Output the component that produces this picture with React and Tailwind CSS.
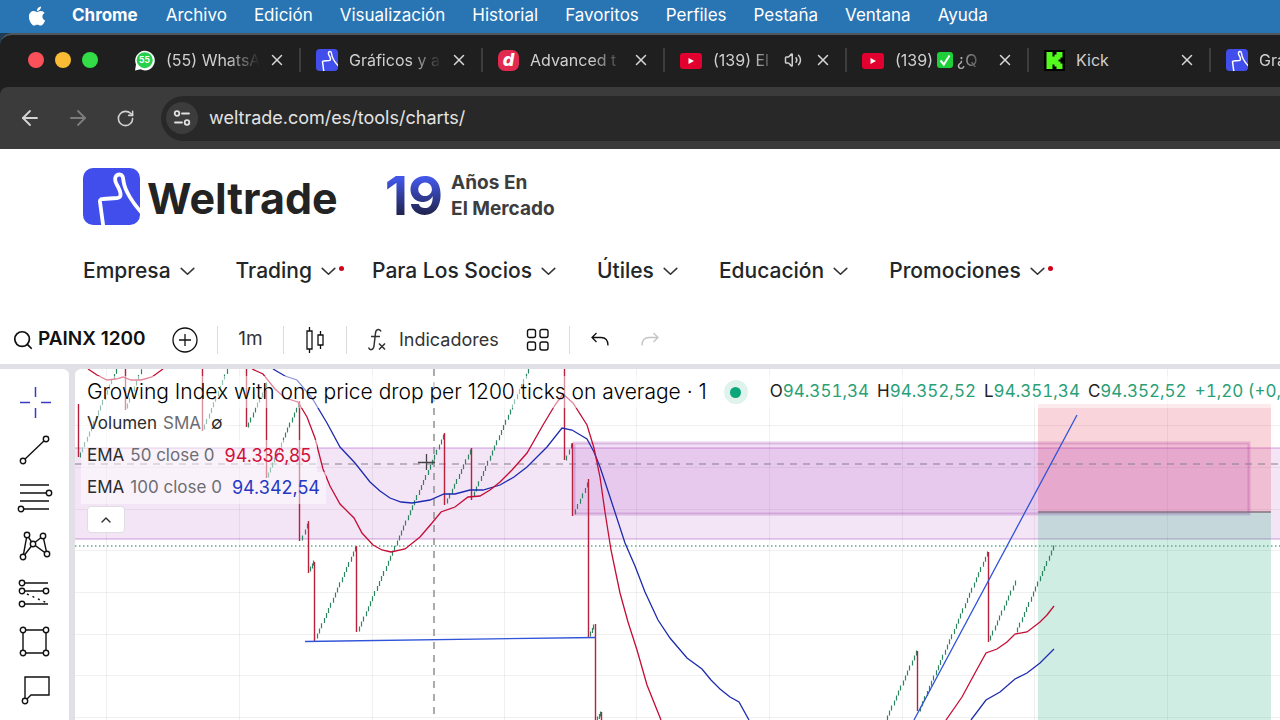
import React from 'react';
import { FaApple } from 'react-icons/fa';
import { ArrowLeft, ArrowRight, RotateCw, Volume2, X, Search, ChevronUp } from 'lucide-react';

const MENU_ITEMS = ['Archivo', 'Edición', 'Visualización', 'Historial', 'Favoritos', 'Perfiles', 'Pestaña', 'Ventana', 'Ayuda'];

const NAV_ITEMS = [
    { label: 'Empresa' },
    { label: 'Trading', dot: true },
    { label: 'Para Los Socios' },
    { label: 'Útiles' },
    { label: 'Educación' },
    { label: 'Promociones', dot: true },
];

function WeltradeMark({ className }) {
    return (
        <svg viewBox="0 0 57 57" className={className} aria-hidden="true">
            <defs>
                <clipPath id="mark-clip"><rect width="57" height="57" rx="10" /></clipPath>
            </defs>
            <rect width="57" height="57" rx="10" fill="#414eec" />
            <path
                d="M20.500 60 L17 34 Q16.500 31 20 31 L34 30 Q38 29.500 37.500 25.500 Q37 22 33.500 16 C30.500 10 33 6.500 36.500 6.500 C40 6.500 40 9.500 40.500 13 C41.500 22 50 36 60 46"
                fill="none" stroke="#fff" strokeWidth="3.800" strokeLinejoin="round" clipPath="url(#mark-clip)"
            />
        </svg>
    );
}

function WhatsappIcon() {
    return (
        <svg viewBox="0 0 21 21" className="w-[21px] h-[21px] shrink-0" aria-hidden="true">
            <path d="M1 20.500 L2 14.500 A9.800 9.800 0 1 1 6.500 19.300 Z" fill="#fff" />
            <circle cx="10.700" cy="10.200" r="8" fill="#25d04a" />
            <text x="10.500" y="13.200" textAnchor="middle" fontSize="8.500" fontWeight="700" fill="#fff" fontFamily="Inter, sans-serif">55</text>
        </svg>
    );
}

function AdvancedIcon() {
    return (
        <span className="w-[21px] h-[21px] shrink-0 rounded-[7px] bg-[#e22a50] text-white text-lg leading-5 font-extrabold italic text-center">d</span>
    );
}

function YoutubeIcon() {
    return (
        <svg viewBox="0 0 22 21" className="w-[22px] h-[21px] shrink-0" aria-hidden="true">
            <rect x="0" y="3" width="22" height="16" rx="3" fill="#e2002f" />
            <path d="M8.500 8 L14 11 L8.500 14 Z" fill="#fff" />
        </svg>
    );
}

function KickIcon() {
    return (
        <svg viewBox="0 0 21 21" className="w-[21px] h-[21px] shrink-0" aria-hidden="true">
            <rect width="21" height="21" fill="#000" />
            <path d="M2.500 2 H8.500 V6.500 H10.500 V4.500 H12.500 V2 H18.500 V7.500 H16.500 V9.500 H14.500 V11.500 H16.500 V13.500 H18.500 V19 H12.500 V16.500 H10.500 V14.500 H8.500 V19 H2.500 Z" fill="#54fc1e" />
        </svg>
    );
}

function CheckEmoji() {
    return (
        <svg viewBox="0 0 16 16" className="inline-block w-4 h-4 mx-1 -mt-1" aria-hidden="true">
            <rect width="16" height="16" rx="3" fill="#1fcf3a" />
            <path d="M3.500 8.500 L6.800 12.500 L12.500 3.500" fill="none" stroke="#fff" strokeWidth="2" />
        </svg>
    );
}

const TABS = [
    { icon: <WhatsappIcon />, title: '(55) WhatsA' },
    { icon: <WeltradeMark className="w-[22px] h-[22px] shrink-0" />, title: 'Gráficos y a' },
    { icon: <AdvancedIcon />, title: 'Advanced t' },
    { icon: <YoutubeIcon />, title: '(139) El', audio: true },
    { icon: <YoutubeIcon />, title: <>(139)<CheckEmoji />¿Q</> },
    { icon: <KickIcon />, title: 'Kick', short: true },
    { icon: <WeltradeMark className="w-[22px] h-[22px] shrink-0" />, title: 'Gráficos y a' },
];

function MenuBar() {
    return (
        <nav className="flex items-center h-[33px] pl-[26px] pb-px gap-[27px] bg-[#2974b2] text-white text-[17px] shrink-0">
            <button aria-label="Apple" className="-mr-[3px]"><FaApple className="w-[22px] h-[22px]" /></button>
            <button className="mr-px font-bold">Chrome</button>
            {MENU_ITEMS.map((item) => <button key={item}>{item}</button>)}
        </nav>
    );
}

function Tab({ icon, title, audio, short }) {
    return (
        <div className="flex items-center w-[182px] h-6 shrink-0 pl-[15px] pr-[13px] border-r-2 border-[#3d3d3d]">
            {icon}
            <span className={`flex-1 min-w-0 ml-[11px] overflow-hidden whitespace-nowrap text-[#cfcfcf] text-base leading-6 ${short ? '' : 'mask-r-from-65% mask-r-to-100%'}`}>
                {title}
            </span>
            {audio && <Volume2 className="w-[18px] h-[18px] ml-2 mr-1 text-[#cfcfcf] shrink-0" />}
            <button aria-label="Cerrar pestaña" className="ml-2 shrink-0 text-[#d6d6d6]"><X className="w-[18px] h-[18px]" /></button>
        </div>
    );
}

function BrowserChrome() {
    return (
        <header className="shrink-0 bg-[#1f3c55]">
            <div className="rounded-tl-xl border-t-2 border-[#50565b] bg-[#1f1f1f] overflow-hidden">
                <div className="flex items-center h-[52px] pl-7 pb-[2px]">
                    <div className="flex gap-[11px] mr-[21px] shrink-0">
                        <span className="w-4 h-4 rounded-full bg-[#f9505a]" />
                        <span className="w-4 h-4 rounded-full bg-[#fbbb35]" />
                        <span className="w-4 h-4 rounded-full bg-[#33dd47]" />
                    </div>
                    {TABS.map((tab, i) => <Tab key={i} {...tab} />)}
                </div>
            </div>
            <div className="bg-[#1f1f1f]">
                <div className="flex items-center h-[62px] pl-[18px] rounded-tl-lg bg-[#3b3b3b]">
                    <button aria-label="Atrás" className="text-[#d4d4d4]"><ArrowLeft className="w-6 h-6" strokeWidth={1.800} /></button>
                    <button aria-label="Adelante" className="ml-6 text-[#7c7c7c]"><ArrowRight className="w-6 h-6" strokeWidth={1.800} /></button>
                    <button aria-label="Recargar" className="ml-[26px] text-[#d4d4d4]"><RotateCw className="w-[19px] h-[19px]" /></button>
                    <div className="flex flex-1 items-center h-[45px] ml-[26px] pl-[5px] rounded-l-full bg-[#282828]">
                        <button aria-label="Información del sitio" className="flex items-center justify-center w-8 h-8 rounded-full bg-[#3c3c3c]">
                            <svg viewBox="0 0 18 16" className="w-[18px] h-4" fill="none" stroke="#e0e0e0" strokeWidth="1.800">
                                <circle cx="4" cy="3.500" r="2.300" />
                                <path d="M9 3.500 H16 M2 12.500 H9" strokeLinecap="round" />
                                <circle cx="14" cy="12.500" r="2.300" />
                            </svg>
                        </button>
                        <input
                            aria-label="Dirección"
                            defaultValue="weltrade.com/es/tools/charts/"
                            className="flex-1 ml-[11px] bg-transparent text-[#e3e3e3] text-lg outline-none"
                        />
                    </div>
                </div>
            </div>
        </header>
    );
}

function SiteHeader() {
    return (
        <header className="shrink-0 pt-[18px] pl-[83px] text-[#232323]">
            <div className="flex items-center h-[58px]">
                <a href="#" className="flex items-center">
                    <WeltradeMark className="w-[57px] h-[57px]" />
                    <span className="ml-[7px] mt-1 text-[43px] leading-[58px] font-bold">Weltrade</span>
                </a>
                <span className="ml-[47px] text-[54px] leading-[58px] font-bold bg-linear-to-b from-[#4257e8] from-20% to-[#1f2148] to-85% bg-clip-text text-transparent">19</span>
                <p className="ml-2 text-[19px] leading-[26px] font-bold text-[#3d3d3d]">Años En<br />El Mercado</p>
            </div>
            <nav className="flex items-center h-9 mt-7 text-[21px] font-medium text-[#222628]">
                {NAV_ITEMS.map(({ label, dot }) => (
                    <a key={label} href="#" className={dot ? 'relative flex items-center mr-9' : 'relative flex items-center mr-[41px]'}>
                        {label}
                        <svg viewBox="0 0 16 10" className="w-[15px] h-[9px] ml-[9px]" fill="none" stroke="#333" strokeWidth="1.700" aria-hidden="true">
                            <path d="M1 1.500 L8 8 L15 1.500" strokeLinecap="round" strokeLinejoin="round" />
                        </svg>
                        {dot && <span className="absolute -right-2 top-[11px] w-[5px] h-[5px] rounded-full bg-[#d0021b]" />}
                    </a>
                ))}
            </nav>
        </header>
    );
}

function Divider() {
    return <span className="w-px h-7 bg-[#dcdce0]" />;
}

function ChartToolbar() {
    return (
        <div className="flex items-center h-[51px] mt-6 pt-[2px] pl-3 text-[#111] text-[19px] shrink-0">
            <button className="flex items-center gap-1 w-[136px] font-semibold whitespace-nowrap">
                <Search className="w-[22px] h-[22px]" strokeWidth={1.900} />PAINX 1200
            </button>
            <button aria-label="Comparar" className="ml-6 mr-[19px]">
                <svg viewBox="0 0 26 26" className="w-[26px] h-[26px]" fill="none" stroke="currentColor" strokeWidth="1.300">
                    <circle cx="13" cy="13" r="12" />
                    <path d="M13 7 V19 M7 13 H19" />
                </svg>
            </button>
            <Divider />
            <button className="w-[65px] text-[#333]">1m</button>
            <Divider />
            <button aria-label="Velas" className="flex justify-center w-[62px]">
                <svg viewBox="0 0 20 28" className="w-5 h-7" fill="none" stroke="currentColor" strokeWidth="1.300">
                    <path d="M2 5 H7 V23 H2 Z M4.500 1 V5 M4.500 23 V27 M13 9 H18 V19 H13 Z M15.500 5 V9 M15.500 19 V23" />
                </svg>
            </button>
            <Divider />
            <button className="flex items-center ml-5 text-lg text-[#333]">
                <svg viewBox="0 0 20 26" className="w-5 h-[26px] mr-3" fill="none" stroke="currentColor" strokeWidth="1.500" aria-hidden="true">
                    <path d="M14 4.500 C13 1.500 9 1.500 8.500 6 L7 19 C6.500 23 3 24 1.500 20.500 M4 9.500 H13 M12 16.500 L18 22.500 M18 16.500 L12 22.500" />
                </svg>
                Indicadores
            </button>
            <button aria-label="Plantillas" className="ml-[27px] mr-[19px]">
                <svg viewBox="0 0 24 24" className="w-6 h-6" fill="none" stroke="currentColor" strokeWidth="1.400">
                    <rect x="1.500" y="1.500" width="8" height="8" rx="2" />
                    <rect x="14" y="1.500" width="8" height="8" rx="2" />
                    <rect x="1.500" y="14" width="8" height="8" rx="2" />
                    <rect x="14" y="14" width="8" height="8" rx="2" />
                </svg>
            </button>
            <Divider />
            <button aria-label="Deshacer" className="ml-5">
                <svg viewBox="0 0 20 16" className="w-5 h-4" fill="none" stroke="currentColor" strokeWidth="1.300">
                    <path d="M6.500 1 L2 5.500 L6.500 10 M2 5.500 H11 Q18 5.500 18 13.500" />
                </svg>
            </button>
            <button aria-label="Rehacer" className="ml-[30px] text-[#c4c4c8]">
                <svg viewBox="0 0 20 16" className="w-5 h-4" fill="none" stroke="currentColor" strokeWidth="1.300">
                    <path d="M13.500 1 L18 5.500 L13.500 10 M18 5.500 H9 Q2 5.500 2 13.500" />
                </svg>
            </button>
        </div>
    );
}

// nodes are drawn as small hollow circles on top of the lines
const DRAW_TOOLS = [
    { name: 'Línea de tendencia', d: 'M6 29 L29 7', nodes: [[29, 7], [6, 29]] },
    { name: 'Retroceso de Fibonacci', d: 'M3 5 H32 M3 13 H32 M3 21 H32 M3 29 H32', nodes: [[32, 13], [4, 29]] },
    { name: 'Patrón XABCD', d: 'M6 29 L10 7 L16 16 L26 8 L30 26 L16 16 Z', nodes: [[10, 7], [26, 8], [16, 16], [6, 29], [30, 26]] },
    { name: 'Posición larga', d: 'M5 7 H31 M5 15 H29 M5 28 H31', dots: 'M10 18 L30 27', nodes: [[5, 7], [5, 15], [29, 15], [5, 28]] },
    { name: 'Rectángulo', d: 'M6 6 H29 V29 H6 Z', nodes: [[6, 6], [29, 6], [6, 29], [29, 29]] },
    { name: 'Comentario', d: 'M8 28 V5 H32 V23 H14 L8 29', nodes: [[8, 29]] },
];

function DrawingRail() {
    return (
        <aside className="flex flex-col w-[69px] shrink-0 pt-[9px] bg-white rounded-tr-md">
            <button aria-label="Cruz" className="flex justify-center items-center h-12 shrink-0">
                <svg viewBox="0 0 36 36" className="w-9 h-9" fill="none" stroke="#3a3ac4" strokeWidth="1.500">
                    <path d="M3 18.500 H13 M24 18.500 H34 M18.500 3 V13 M18.500 24 V34" />
                </svg>
            </button>
            {DRAW_TOOLS.map((tool) => (
                <button key={tool.name} aria-label={tool.name} className="flex justify-center items-center h-12 shrink-0">
                    <svg viewBox="0 0 36 36" className="w-9 h-9" fill="none" stroke="#111" strokeWidth="1.400">
                        <path d={tool.d} />
                        {tool.dots && <path d={tool.dots} strokeDasharray="2 4" />}
                        {tool.nodes.map(([x, y]) => <circle key={`${x}-${y}`} cx={x} cy={y} r="2.700" fill="#fff" />)}
                    </svg>
                </button>
            ))}
        </aside>
    );
}

// [x, top, bottom]
const DROPS = [
    [78, 404, 457], [125, 369, 410], [202, 369, 431], [246, 369, 427], [266, 390, 478], [299, 401, 541],
    [308, 521, 573], [314, 562, 642], [356, 546, 632], [444, 433, 505], [471, 448, 500], [564, 369, 460],
    [572, 443, 516], [588, 479, 637], [595, 624, 730], [601, 712, 730], [917, 651, 711], [988, 552, 642],
];

// [x1, y1, x2, y2], price climbing tick by tick
const CLIMBS = [
    [80, 455, 118, 366], [127, 406, 143, 366], [204, 427, 229, 366], [248, 425, 266, 385], [268, 475, 298, 405],
    [302, 538, 307, 526], [310, 569, 313, 563], [317, 636, 355, 549], [359, 629, 443, 437], [447, 501, 470, 452],
    [474, 494, 530, 366], [566, 458, 571, 446], [575, 512, 587, 485], [590, 634, 593, 627], [597, 719, 600, 714],
    [887, 718, 916, 653], [920, 709, 987, 554], [990, 638, 1015, 583], [1017, 630, 1053, 548],
];

const EMA_50 = [
    '88,369 97,375 107,380 116,379 123,377 131,380 141,380 152,377 163,369',
    '252,369 263,374 275,389 285,398 298,402 307,417 315,438 323,469 330,486 340,504 354,518 362,533 373,545 382,550 391,552 405,549 420,537 432,523 441,512 455,507 468,497 480,496 490,490 500,482 512,470 527,453 543,425 555,405 563,394 573,403 587,425 594,448 600,477 605,512 611,550 620,593 628,622 637,650 647,685 661,720',
    '946,720 962,697 975,673 986,653 997,649 1007,642 1015,634 1027,632 1040,622 1047,615 1054,606',
];
const EMA_100 = [
    '273,369 285,376 297,380 312,398 327,423 340,447 355,463 370,482 380,491 390,498 401,502 412,503 430,500 444,494 455,494 470,490 483,490 500,485 514,477 527,467 547,447 562,428 572,430 587,439 594,452 600,467 610,497 625,543 635,566 645,592 658,620 670,638 687,658 702,669 711,680 720,689 730,697 739,702 749,720',
    '971,720 986,700 1000,692 1015,679 1027,673 1040,663 1054,649',
];

const GRID_X = [106, 239, 372, 504, 636, 769, 902, 1034, 1167];
const GRID_Y = [425, 467, 509, 550, 592, 634, 675, 717];

function Climb({ line: [x1, y1, x2, y2] }) {
    const count = Math.max(2, Math.round((x2 - x1) / 2.2));
    const ticks = [];
    for (let i = 0; i <= count; i++) {
        const x = x1 + ((x2 - x1) * i) / count;
        const y = y1 + ((y2 - y1) * i) / count;
        ticks.push(`M${Math.round(x) + 0.5} ${(y - 2.5).toFixed(1)} v5`);
    }
    return <path d={ticks.join(' ')} stroke="#2b8560" strokeWidth="1.200" />;
}

function PriceChart() {
    return (
        <svg className="absolute inset-0 w-full h-full" fill="none" aria-label="PAINX 1200">
            <g transform="translate(-75 -369)">
                <g stroke="#000" strokeOpacity="0.06">
                    {GRID_X.map((x) => <path key={x} d={`M${x + 0.5} 369 V2000`} />)}
                    {GRID_Y.map((y) => <path key={y} d={`M75 ${y + 0.5} H4000`} />)}
                </g>

                <rect x="70" y="448" width="4000" height="91" fill="#a22bbd" fillOpacity="0.13" stroke="#9c27b0" strokeOpacity="0.22" strokeWidth="2" />
                <rect x="574" y="443" width="675" height="71" fill="#a22bbd" fillOpacity="0.14" stroke="#8c2b9c" strokeOpacity="0.22" strokeWidth="3" />
                <rect x="1038" y="404" width="233" height="108" fill="#e5264d" fillOpacity="0.2" />
                <rect x="1038" y="512" width="233" height="1500" fill="#16a573" fillOpacity="0.2" />
                <path d="M1038 512 H1271" stroke="#83737f" strokeWidth="1.500" />

                <path d="M75 546 H4000" stroke="#5fae8c" strokeWidth="1.500" strokeDasharray="1.500 2.500" />
                <path d="M75 464 H4000" stroke="#8c8291" strokeOpacity="0.7" strokeWidth="1.500" strokeDasharray="7 6" />
                <path d="M434 369 V2000" stroke="#909090" strokeWidth="1.500" strokeDasharray="7 6" />

                {CLIMBS.map((line) => <Climb key={line[0]} line={line} />)}
                {DROPS.map(([x, top, bottom]) => (
                    <path key={x} d={`M${x + 0.5} ${top} V${bottom}`} stroke="#b8203c" strokeWidth="1.400" />
                ))}
                {EMA_100.map((points) => <polyline key={points} points={points} stroke="#1d2bb0" strokeWidth="1.300" />)}
                {EMA_50.map((points) => <polyline key={points} points={points} stroke="#c40d35" strokeWidth="1.300" />)}

                <path d="M914 720 L1077 415 M305 641.500 L596 637.500" stroke="#2f54d8" strokeWidth="1.300" />
                <path d="M426.500 454 V470 M418 462.500 H435" stroke="#444" strokeWidth="1.300" />
            </g>
        </svg>
    );
}

const OHLC = [['O', '94.351,34'], ['H', '94.352,52'], ['L', '94.351,34'], ['C', '94.352,52']];

function Legend() {
    return (
        <div className="relative pt-[7px] pl-[6px] text-[17px] text-[#2b2b2b]">
            <div className="flex items-center h-8 pl-[6px] whitespace-nowrap overflow-hidden bg-white/50">
                <h1 className="text-[21px] leading-8 font-light text-black">Growing Index with one price drop per 1200 ticks on average · 1</h1>
                <span className="flex items-center justify-center w-6 h-6 ml-[17px] rounded-full bg-[#dff3ec] shrink-0">
                    <span className="w-[11px] h-[11px] rounded-full bg-[#0ca678]" />
                </span>
                <div className="flex gap-2 ml-[22px] tabular-nums text-[#2a9f76]">
                    {OHLC.map(([name, value]) => (
                        <span key={name}><span className="text-[#222]">{name}</span>{value}</span>
                    ))}
                    <span>+1,20 (+0,00%)</span>
                </div>
            </div>
            <div className="flex items-center w-fit h-8 px-[6px] bg-white/50">
                Volumen<span className="ml-[6px] text-[#6d6d72]">SMA</span><span className="ml-[10px]">∅</span>
            </div>
            <div className="flex items-center w-fit h-8 px-[6px] bg-white/50">
                EMA<span className="ml-[6px] text-[#6d6d72]">50 close 0</span><span className="ml-[10px] text-lg text-[#d0103a]">94.336,85</span>
            </div>
            <div className="flex items-center w-fit h-8 px-[6px] bg-white/50">
                EMA<span className="ml-[6px] text-[#6d6d72]">100 close 0</span><span className="ml-[10px] text-lg text-[#2438c4]">94.342,54</span>
            </div>
            <button aria-label="Ocultar leyenda" className="flex items-center justify-center w-[38px] h-[27px] mt-[2px] ml-[6px] rounded-sm border border-[#dddde2] bg-white">
                <ChevronUp className="w-4 h-4" />
            </button>
        </div>
    );
}

export default function App() {
    return (
        <div className="flex flex-col h-screen overflow-hidden bg-white font-['Inter',sans-serif]">
            <MenuBar />
            <BrowserChrome />
            <SiteHeader />
            <ChartToolbar />
            <main className="flex flex-1 min-h-0 gap-[6px] pt-[5px] bg-[#e0e0e6]">
                <DrawingRail />
                <section className="relative flex-1 min-w-0 overflow-hidden bg-white rounded-tl-md">
                    <PriceChart />
                    <Legend />
                </section>
            </main>
        </div>
    );
}
